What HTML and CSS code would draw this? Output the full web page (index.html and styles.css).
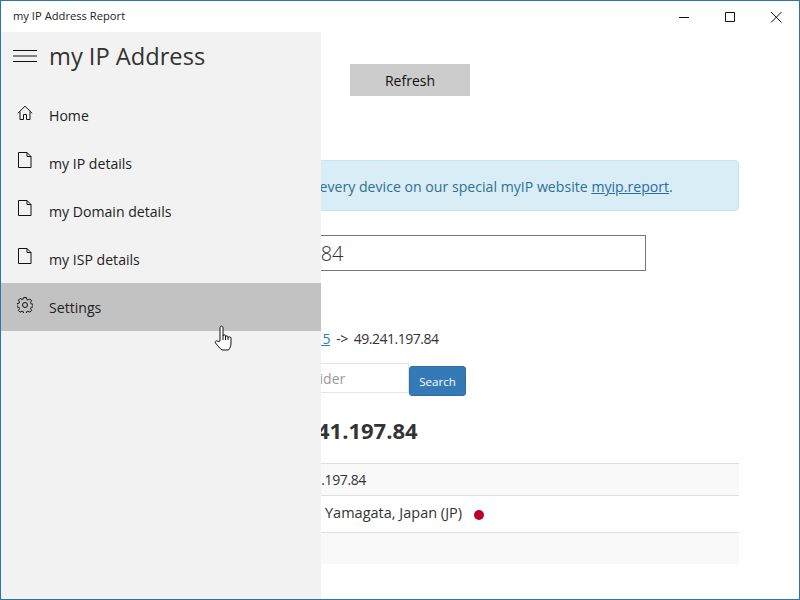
FILE: index.html
```html
<!DOCTYPE html>
<html lang="en">
<head>
<meta charset="utf-8">
<title>my IP Address Report</title>
<link rel="stylesheet" href="styles.css">
</head>
<body>
<div class="window">
  <header class="titlebar">
    <span class="app-title">my IP Address Report</span>
    <div class="caption">
      <svg class="cap-icon" viewBox="0 0 46 32"><path d="M18 16.5h10" /></svg>
      <svg class="cap-icon" viewBox="0 0 46 32"><path d="M18.5 11.5h9v9h-9z" /></svg>
      <svg class="cap-icon" viewBox="0 0 46 32"><path d="M18 11l10.500 10.500M28.500 11L18 21.500" /></svg>
    </div>
  </header>
  <div class="body">
    <main class="main">
      <button class="refresh">Refresh</button>
      <div class="alert">every device on our special myIP website <a href="#">myip.report</a>.</div>
      <input class="ip-input" value="49.241.197.84">
      <p class="trace"><a href="#">192.168.0.15</a> -&gt; 49.241.197.84</p>
      <form class="search">
        <input class="search-input" placeholder="Provider">
        <button class="search-btn" type="button">Search</button>
      </form>
      <h2 class="heading">49.241.197.84</h2>
      <div class="table">
        <div class="row odd r1">49.241.197.84</div>
        <div class="row r2">Yamagata, Japan (JP) <span class="flag"></span></div>
        <div class="row odd r3"></div>
      </div>
    </main>
    <nav class="sidebar">
      <div class="brand">
        <svg class="burger" viewBox="0 0 24 12"><path d="M0 .5h24M0 6h24M0 11.500h24"/></svg>
        <span class="brand-name">my IP Address</span>
      </div>
      <a class="item" href="#">
        <svg class="icon" viewBox="0 0 16 16"><path d="M.8 8.300L8 1.200l7.200 7.100M3 6.500v8h3.500V9.500h3v5H13v-8"/></svg>
        <span>Home</span>
      </a>
      <a class="item" href="#">
        <svg class="icon doc" viewBox="0 0 14 16"><path d="M.5.500h8.500l4 4v11H.5zM9 .5v4h4"/></svg>
        <span>my IP details</span>
      </a>
      <a class="item" href="#">
        <svg class="icon doc" viewBox="0 0 14 16"><path d="M.5.500h8.500l4 4v11H.5zM9 .5v4h4"/></svg>
        <span>my Domain details</span>
      </a>
      <a class="item" href="#">
        <svg class="icon doc" viewBox="0 0 14 16"><path d="M.5.500h8.500l4 4v11H.5zM9 .5v4h4"/></svg>
        <span>my ISP details</span>
      </a>
      <a class="item active" href="#">
        <svg class="icon" viewBox="0 0 16 16"><circle cx="8" cy="8" r="2.500"/><path d="M6.700.5h2.600l.4 2 1.300.6 1.800-1.100 1.800 1.800-1.100 1.800.6 1.300 2 .4v2.600l-2 .4-.6 1.300 1.100 1.800-1.800 1.800-1.800-1.100-1.300.6-.4 2H6.700l-.4-2-1.300-.6-1.800 1.100-1.800-1.800 1.100-1.800-.6-1.300-2-.4V6.700l2-.4.6-1.300-1.100-1.800 1.800-1.800 1.800 1.100 1.300-.6z"/></svg>
        <span>Settings</span>
      </a>
    </nav>
    <svg class="cursor" viewBox="0 0 19 26"><path d="M6 3c0-2.500 3-2.500 3 0v8c0-1.500 2.500-1.500 2.500 0v1c0-1.500 2.500-1.500 2.500 0v1c0-1.500 3-1.500 3 0v5c0 3-1 5-2.500 7H8c-2-1.500-4-4-6.500-7-1-1.500 1-3 2.500-1.500L6 16z"/><path d="M9 11v4M11.500 12v3M14 13v2"/></svg>
  </div>
</div>
</body>
</html>
```
FILE: styles.css
```css
* { box-sizing: border-box; }
html, body { margin: 0; padding: 0; }
body {
  width: 800px;
  height: 600px;
  overflow: hidden;
  font-family: "Open Sans", "Noto Sans", sans-serif;
  color: #333;
  background: #fff;
}
.window {
  width: 800px;
  height: 600px;
  display: flex;
  flex-direction: column;
  border: 1px solid #2b74ae;
  overflow: hidden;
}
.titlebar {
  height: 31px;
  flex: none;
  display: flex;
  align-items: center;
  justify-content: space-between;
  padding-left: 12px;
}
.app-title { font-size: 11.200px; color: #222; margin-bottom: 2px; }
.caption { display: flex; }
.cap-icon { width: 46px; height: 32px; fill: none; stroke: #111; stroke-width: 1; }
.body { flex: 1; position: relative; overflow: hidden; }

.main { padding: 32px 60px 0 180px; height: 100%; overflow: hidden; }
.refresh {
  display: block;
  width: 120px;
  height: 32px;
  margin-left: 169px;
  border: 0;
  background: #ccc;
  color: #111;
  font: 14px "Open Sans", sans-serif;
}
.alert {
  margin-top: 64px;
  height: 51px;
  padding: 16px 0 0 137.500px;
  border: 1px solid #bce8f1;
  border-radius: 4px;
  background: #d9edf7;
  color: #31708f;
  font-size: 14.140px;
  white-space: nowrap;
}
.alert a { color: #2b6c9e; }
.ip-input {
  display: block;
  margin-top: 24px;
  width: 465px;
  height: 36px;
  padding: 0 0 0 33px;
  border: 1px solid #777;
  font: 300 20px "Open Sans", sans-serif;
  color: #333;
}
.trace { margin: 58px 0 0; padding-left: 72px; font-size: 14px; line-height: 20px; letter-spacing: -0.5px; word-spacing: 3px; }
.trace a { color: #337ab7; text-decoration: underline; }
.search { display: flex; align-items: flex-start; margin-top: 14px; }
.search-input {
  width: 228px;
  height: 30px;
  padding: 0 12px 0 108px;
  border: 1px solid #e4e4e4;
  font: 14px "Open Sans", sans-serif;
  color: #555;
}
.search-input::placeholder { color: #999; }
.search-btn {
  width: 57px;
  height: 30px;
  margin-top: 3px;
  border: 1px solid #2e6da4;
  border-radius: 3px;
  background: #337ab7;
  color: #fff;
  font: 11.500px "Open Sans", sans-serif;
}
.heading { margin: 19px 0 0; padding-left: 92px; font-size: 22px; line-height: 30px; font-weight: 700; color: #333; }
.table { margin-top: 18px; font-size: 14px; }
.row { border-top: 1px solid #ddd; padding-left: 99px; display: flex; align-items: center; white-space: pre; }
.odd { background: #f9f9f9; }
.r1 { height: 32px; letter-spacing: -0.4px; }
.r2 { height: 37px; padding-left: 144px; padding-bottom: 3px; font-size: 14.500px; }
.r3 { height: 32px; }
.flag { width: 10px; height: 10px; border-radius: 50%; background: #bc002d; margin: 5px 0 0 8px; }

.sidebar {
  position: absolute;
  left: 0;
  top: 0;
  bottom: 0;
  width: 320px;
  background: #f2f2f2;
}
.brand { height: 48px; margin-bottom: 11px; display: flex; align-items: center; padding-left: 12px; }
.burger { width: 24px; height: 12px; fill: none; stroke: #111; stroke-width: 1; margin-right: 12px; }
.brand-name { font-size: 23.650px; color: #333; }
.item { height: 48px; display: flex; align-items: center; color: #222; text-decoration: none; font-size: 14.100px; padding-left: 16px; }
.icon { width: 16px; height: 16px; fill: none; stroke: #111; stroke-width: 1; margin-right: 16px; flex: none; margin-top: -4px; }
.doc { width: 14px; height: 16px; margin-left: 1px; margin-right: 17px; margin-top: -6px; }
.active { background: #c2c2c2; }
.cursor {
  position: absolute;
  left: 213px;
  top: 293px;
  width: 19px;
  height: 26px;
  fill: #fff;
  stroke: #111;
  stroke-width: 1;
}
```
